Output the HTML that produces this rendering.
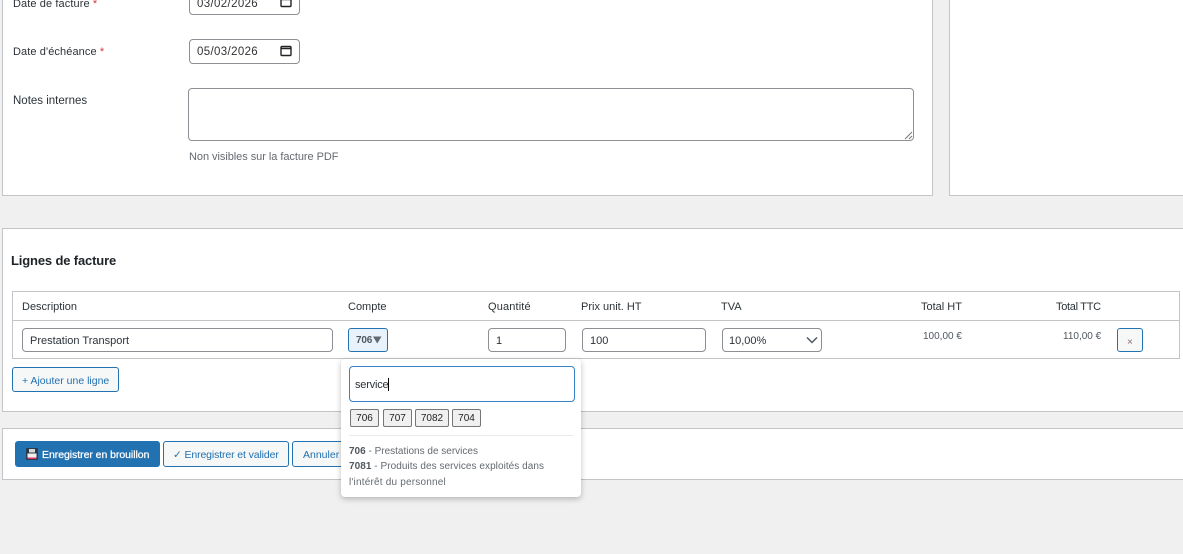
<!DOCTYPE html>
<html lang="fr"><head><meta charset="utf-8"><title>Facture</title>
<style>
html,body{margin:0;padding:0;width:1183px;height:554px;overflow:hidden;background:#f0f0f1}
body{position:relative;font-family:"Liberation Sans",sans-serif;font-size:11px;color:#2c3338}
div,span.t{box-sizing:border-box;position:absolute}
.t{white-space:nowrap;line-height:18px}
.panel{background:#fff;border:1px solid #c3c4c7}
.in{background:#fff;border:1px solid #8c8f94;border-radius:4px}
.btn{background:#f6f7f7;border:1px solid #2271b1;border-radius:3px}
.blue{color:#2271b1}
.chip{background:#f0f0f0;border:1px solid #767676;border-radius:2px;top:409px;height:18px;font-size:10px;line-height:17px;text-align:center;color:#222}
.r{color:#d63638}
svg{position:absolute}
.d{font-size:11.500px;color:#333;letter-spacing:.35px}
.pop{font-size:10px;color:#646970}
.pop b{color:#50575e}
</style></head><body>
<div class="panel" style="left:2px;top:-40px;width:931px;height:236px"></div>
<div class="panel" style="left:949px;top:-40px;width:260px;height:236px"></div>
<div class="panel" style="left:2px;top:228px;width:1200px;height:184px"></div>
<div class="panel" style="left:2px;top:428px;width:1200px;height:52px"></div>

<span class="t" style="left:13px;top:-5px;letter-spacing:.1px">Date de facture <span class="r">*</span></span>
<div class="in" style="left:189px;top:-9px;width:111px;height:24px"></div>
<span class="t d" style="left:197px;top:-5px">03/02/2026</span>
<svg style="left:280px;top:-4px" width="12" height="12" viewBox="0 0 12 12"><path d="M2 1.500h8a1 1 0 0 1 1 1v7a1 1 0 0 1-1 1H2a1 1 0 0 1-1-1v-7a1 1 0 0 1 1-1z M1 3.500h10" fill="none" stroke="#222" stroke-width="1.400"/></svg>

<span class="t" style="left:13px;top:43px;letter-spacing:.1px">Date d'échéance <span class="r">*</span></span>
<div class="in" style="left:189px;top:39px;width:111px;height:25px"></div>
<span class="t d" style="left:197px;top:43px">05/03/2026</span>
<svg style="left:280px;top:45px" width="12" height="12" viewBox="0 0 12 12"><path d="M2 1.500h8a1 1 0 0 1 1 1v7a1 1 0 0 1-1 1H2a1 1 0 0 1-1-1v-7a1 1 0 0 1 1-1z M1 3.500h10" fill="none" stroke="#222" stroke-width="1.400"/></svg>

<span class="t" style="left:13px;top:92px;font-size:11.500px">Notes internes</span>
<div class="in" style="left:188px;top:88px;width:726px;height:53px"></div>
<svg style="left:904px;top:131px" width="9" height="9" viewBox="0 0 9 9"><path d="M1 8L8 1M5 8L8 5" stroke="#777" stroke-width="1"/></svg>
<span class="t" style="left:189px;top:148px;color:#646970;letter-spacing:-.05px">Non visibles sur la facture PDF</span>

<span class="t" style="left:11px;top:252px;font-size:13px;font-weight:bold;color:#1d2327;letter-spacing:-.15px">Lignes de facture</span>

<div style="left:12px;top:291px;width:1168px;height:68px;border:1px solid #c3c4c7;background:#fff"></div>
<div style="left:13px;top:320px;width:1166px;height:1px;background:#c3c4c7"></div>
<span class="t" style="left:22px;top:298px">Description</span>
<span class="t" style="left:348px;top:298px">Compte</span>
<span class="t" style="left:488px;top:298px;letter-spacing:.15px">Quantité</span>
<span class="t" style="left:581px;top:298px">Prix unit. HT</span>
<span class="t" style="left:721px;top:298px">TVA</span>
<span class="t" style="left:921px;top:298px">Total HT</span>
<span class="t" style="left:1056px;top:298px;letter-spacing:-.3px">Total TTC</span>

<div class="in" style="left:22px;top:328px;width:311px;height:24px"></div>
<span class="t" style="left:30px;top:332px">Prestation Transport</span>
<div style="left:348px;top:328px;width:40px;height:24px;background:#e7f2fc;border:1px solid #2271b1;border-radius:3px"></div>
<span class="t" style="left:356px;top:332px;font-size:10px;font-weight:bold;color:#50575e;letter-spacing:-.2px">706</span>
<svg style="left:373px;top:336px" width="9" height="8" viewBox="0 0 9 8"><path d="M0 .500h8.500L4.250 7.500z" fill="#646970"/></svg>
<div class="in" style="left:488px;top:328px;width:78px;height:24px"></div>
<span class="t" style="left:496px;top:332px">1</span>
<div class="in" style="left:582px;top:328px;width:124px;height:24px"></div>
<span class="t" style="left:590px;top:332px">100</span>
<div class="in" style="left:722px;top:328px;width:100px;height:24px"></div>
<span class="t" style="left:729px;top:332px">10,00%</span>
<svg style="left:806px;top:336px" width="12" height="8" viewBox="0 0 12 8"><path d="M1 1.500L6 6.500L11 1.500" fill="none" stroke="#50575e" stroke-width="1.500"/></svg>
<span class="t" style="left:923px;top:328px;font-size:10px;color:#50575e">100,00 €</span>
<span class="t" style="left:1063px;top:328px;font-size:10px;color:#50575e">110,00 €</span>
<div class="btn" style="left:1117px;top:328px;width:26px;height:24px"></div>
<span class="t" style="left:1127px;top:334px;font-size:10px;color:#8a6a78">×</span>

<div class="btn" style="left:12px;top:367px;width:107px;height:25px"></div>
<span class="t blue" style="left:22px;top:372px;font-size:10.500px">+ Ajouter une ligne</span>

<div style="left:15px;top:441px;width:145px;height:26px;background:#2271b1;border-radius:3px"></div>
<svg style="left:26px;top:448px" width="12" height="12" viewBox="0 0 12 12"><rect width="12" height="12" rx="1" fill="#2b3a4a"/><rect x="3" y="1" width="6" height="3.500" fill="#d8d8d8"/><rect x="1.500" y="5.500" width="9" height="4.500" fill="#f0f0f0"/><rect x="1.500" y="9.500" width="9" height="1.500" fill="#e0356f"/></svg>
<span class="t" style="left:42px;top:446px;font-size:10.500px;color:#fff;letter-spacing:-.05px;-webkit-text-stroke:.25px #fff">Enregistrer en brouillon</span>
<div class="btn" style="left:163px;top:441px;width:126px;height:26px"></div>
<span class="t blue" style="left:173px;top:446px;font-size:10.500px;letter-spacing:-.12px">✓ Enregistrer et valider</span>
<div class="btn" style="left:292px;top:441px;width:60px;height:26px"></div>
<span class="t blue" style="left:303px;top:446px;font-size:10.500px">Annuler</span>

<div style="left:341px;top:359px;width:240px;height:138px;background:#fff;border-radius:4px;box-shadow:0 2px 6px rgba(0,0,0,.25)"></div>
<div style="left:349px;top:366px;width:226px;height:36px;background:#fff;border:1px solid #3582c4;border-radius:4px"></div>
<span class="t" style="left:355px;top:376px;letter-spacing:-.2px">service</span>
<div style="left:388px;top:378px;width:1px;height:13px;background:#000"></div>
<div class="chip" style="left:350px;width:29px">706</div>
<div class="chip" style="left:383px;width:29px">707</div>
<div class="chip" style="left:415px;width:34px">7082</div>
<div class="chip" style="left:452px;width:29px">704</div>
<div style="left:349px;top:435px;width:224px;height:1px;background:#eaeaea"></div>
<span class="t pop" style="left:349px;top:443px"><b>706</b> - Prestations de services</span>
<span class="t pop" style="left:349px;top:458px;letter-spacing:.05px"><b>7081</b> - Produits des services exploités dans</span>
<span class="t pop" style="left:349px;top:474px;letter-spacing:.2px">l'intérêt du personnel</span>
</body></html>
